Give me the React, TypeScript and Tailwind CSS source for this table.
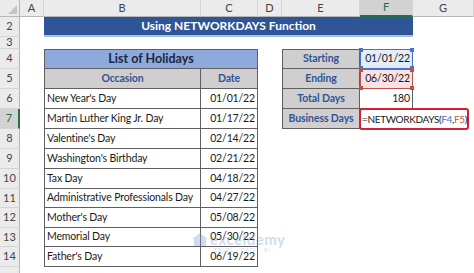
import React from "react";

const BORDER = "border-[#5f5f5f]";
const DATA = "text-[10.5px] tracking-[-0.15px]";
const LABEL = "font-bold text-[10.5px] tracking-[-0.1px] text-[#2f5597]";

function RowHead({ n, h, selected }: { n?: string; h: string; selected?: boolean }) {
  return (
    <div
      className={`${h} w-[20px] shrink-0 flex items-center justify-center text-[11px] border-b border-[#d4d4d4] ${
        selected
          ? "bg-[#d2d2d2] text-[#217346] border-r-2 border-r-[#217346]"
          : "bg-[#ebebeb] text-[#444] border-r border-r-[#b7b7b7]"
      }`}
    >
      {n}
    </div>
  );
}

function Row({ n, h, selected, children }: { n?: string; h: string; selected?: boolean; children?: React.ReactNode }) {
  return (
    <div className={`flex ${h} relative`}>
      <RowHead n={n} h={h} selected={selected} />
      {children}
    </div>
  );
}

const holidays: [string, string][] = [
  ["New Year's Day", "01/01/22"],
  ["Martin Luther King Jr. Day", "01/17/22"],
  ["Valentine's Day", "02/14/22"],
  ["Washington's Birthday", "02/21/22"],
  ["Tax Day", "04/18/22"],
  ["Administrative Professionals Day", "04/27/22"],
  ["Mother's Day", "05/08/22"],
  ["Memorial Day", "05/30/22"],
  ["Father's Day", "06/19/22"],
];

const rowHeights = ["h-[20px]", "h-[20px]", "h-[20px]", "h-[20px]", "h-[20px]", "h-[19px]", "h-[20px]", "h-[19px]", "h-[20px]"];

function Handles({ color }: { color: string }) {
  return (
    <>
      <div className={`absolute -left-[2px] -top-[2px] w-[4px] h-[4px] ${color}`} />
      <div className={`absolute -right-[2px] -top-[2px] w-[4px] h-[4px] ${color}`} />
      <div className={`absolute -left-[2px] -bottom-[2px] w-[4px] h-[4px] ${color}`} />
      <div className={`absolute -right-[2px] -bottom-[2px] w-[4px] h-[4px] ${color}`} />
    </>
  );
}

export default function App() {
  const cols: [string, string, boolean?][] = [
    ["A", "w-[24px]"],
    ["B", "w-[157px]"],
    ["C", "w-[57px]"],
    ["D", "w-[24px]"],
    ["E", "w-[78px]"],
    ["F", "w-[53px]", true],
    ["G", "flex-1"],
  ];
  return (
    <div className="w-[474px] h-[273px] overflow-hidden bg-white relative font-['Lato',sans-serif] text-[#1a1a1a]">
      {/* column headers */}
      <div className="flex h-[17px]">
        <div className="w-[20px] h-[17px] bg-[#ebebeb] border-r border-b border-[#b7b7b7] relative">
          <svg className="absolute right-[2px] bottom-[2px]" width="9" height="9" viewBox="0 0 9 9">
            <polygon points="9,0 9,9 0,9" fill="#c4c4c4" />
          </svg>
        </div>
        {cols.map(([l, w, sel]) => (
          <div
            key={l}
            className={`${w} h-[17px] flex items-center justify-center text-[11px] border-r border-[#d4d4d4] ${
              sel
                ? "bg-[#d2d2d2] text-[#217346] border-b-2 border-b-[#217346]"
                : "bg-[#ebebeb] text-[#444] border-b border-b-[#b7b7b7]"
            }`}
          >
            {l}
          </div>
        ))}
      </div>

      {/* row 2 */}
      <Row n="2" h="h-[20px]">
        <div className="w-[24px]" />
        <div className="w-[369px] h-[20px] bg-[#2f5597] border-b-2 border-[#9dc3e6] flex items-center justify-center text-white font-bold text-[12px]">
          Using NETWORKDAYS Function
        </div>
      </Row>

      {/* row 3 */}
      <Row n="3" h="h-[12px]" />

      {/* row 4 */}
      <Row n="4" h="h-[20px]">
        <div className="w-[24px]" />
        <div className={`w-[214px] border ${BORDER} bg-[#8ea9db] flex items-center justify-center font-bold text-[12.5px] text-[#1c2740]`}>
          List of Holidays
        </div>
        <div className="w-[24px]" />
        <div className={`w-[78px] border ${BORDER} bg-[#d0cece] flex items-center justify-center ${LABEL}`}>
          Starting
        </div>
        <div className={`w-[53px] relative border border-[#4472c4] bg-[#e3edf8] flex items-center justify-end pr-[2px] ${DATA}`}>
          01/01/22
          <Handles color="bg-[#4472c4]" />
        </div>
      </Row>

      {/* row 5 */}
      <Row n="5" h="h-[20px]">
        <div className="w-[24px]" />
        <div className={`w-[157px] border-l border-r border-b ${BORDER} bg-[#d0cece] flex items-center justify-center ${LABEL}`}>
          Occasion
        </div>
        <div className={`w-[57px] border-r border-b ${BORDER} bg-[#d0cece] flex items-center justify-center ${LABEL}`}>
          Date
        </div>
        <div className="w-[24px]" />
        <div className={`w-[78px] border-l border-r border-b ${BORDER} bg-[#d0cece] flex items-center justify-center ${LABEL}`}>
          Ending
        </div>
        <div className={`w-[53px] relative border border-[#c0504d] bg-[#fbe3e3] flex items-center justify-end pr-[2px] ${DATA}`}>
          06/30/22
          <Handles color="bg-[#c0504d]" />
        </div>
      </Row>

      {holidays.map(([name, date], i) => {
        const n = i + 6;
        const h = rowHeights[i];
        return (
          <Row key={n} n={String(n)} h={h} selected={n === 7}>
            <div className="w-[24px]" />
            <div className={`w-[157px] border-l border-r border-b ${BORDER} flex items-center pl-[2px] whitespace-nowrap ${DATA}`}>
              {name}
            </div>
            <div className={`w-[57px] border-r border-b ${BORDER} flex items-center justify-end pr-[2px] ${DATA}`}>
              {date}
            </div>
            {n === 6 && (
              <>
                <div className="w-[24px]" />
                <div className={`w-[78px] border-l border-r border-b ${BORDER} bg-[#d0cece] flex items-center justify-center ${LABEL}`}>
                  Total Days
                </div>
                <div className={`w-[53px] border-r border-b ${BORDER} flex items-center justify-end pr-[2px] ${DATA}`}>
                  180
                </div>
              </>
            )}
            {n === 7 && (
              <>
                <div className="w-[24px]" />
                <div className={`w-[78px] border-l border-r border-b ${BORDER} bg-[#d0cece] flex items-center justify-center whitespace-nowrap ${LABEL}`}>
                  Business Days
                </div>
                <div className={`w-[53px] border-b ${BORDER} relative`}>
                  <div className="absolute -left-[1px] -top-[1px] w-[110px] h-[22px] rounded-[3px] border-2 border-[#d81f32] bg-white flex items-center pl-[1px] text-[10px] tracking-[-0.35px] whitespace-nowrap">
                    =NETWORKDAYS(<span className="text-[#4472c4]">F4</span>,<span className="text-[#c0504d]">F5</span>)
                  </div>
                </div>
              </>
            )}
          </Row>
        );
      })}

      {/* row 15 (only its top edge is visible) */}
      <Row h="h-[20px]" />

      {/* watermark */}
      <div className="absolute left-[192px] top-[232px] flex flex-col items-start opacity-35 pointer-events-none">
        <div className="flex items-center gap-[2px]">
          <svg width="16" height="13" viewBox="0 0 16 13">
            <polygon points="8,0 16,6 14,6 14,13 2,13 2,6 0,6" fill="#7b9ccc" />
          </svg>
          <span className="text-[15px] font-bold text-[#7b9ccc] leading-none tracking-[0.5px]">exceldemy</span>
        </div>
        <span className="text-[5px] text-[#7b9ccc] ml-[22px] tracking-[1px]">EXCEL · DATA · BI</span>
      </div>
    </div>
  );
}
